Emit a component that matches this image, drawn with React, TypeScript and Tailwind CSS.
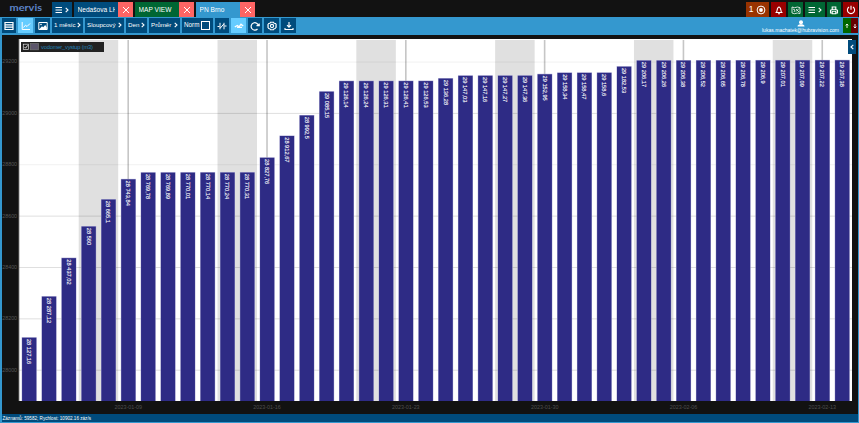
import React from "react";

const values = [
  28127.16, 28287.12, 28437.02, 28560, 28665.1, 28743.84, 28769.78, 28769.89, 28770.01, 28770.14, 28770.24,
  28770.31, 28827.76, 28912.67, 28992.5, 29085.15, 29126.14, 29126.24, 29126.31, 29126.41, 29126.53, 29136.28,
  29147.03, 29147.16, 29147.27, 29147.36, 29152.95, 29158.34, 29158.47, 29158.6, 29182.53, 29206.17, 29206.26,
  29206.38, 29206.52, 29206.65, 29206.78, 29206.9, 29207.01, 29207.09, 29207.22, 29207.38,
];
const dates = ["2023-01-09", "2023-01-16", "2023-01-23", "2023-01-30", "2023-02-06", "2023-02-13"];
const ticks = [29200, 29000, 28800, 28600, 28400, 28200, 28000];

// The chart's own coordinates start at the left border and below the toolbar.
const STEP = 19.83;
const LEFT = 27.2;
const yOf = (v: number) => 335.2 - (v - 28000) * 0.2568;
const label = (v: number) => {
  const [whole, frac] = String(v).split(".");
  return whole.slice(0, 2) + " " + whole.slice(2) + (frac ? "," + frac : "");
};
const widthOf = (s: string) => [...s].reduce((w, c) => w + (c === " " || c === "," ? 1.6 : 3.15), 0);

function Chart() {
  return (
    <svg width="856" height="379" viewBox="0 0 856 379" className="block" fontFamily="'Liberation Sans', Arial, sans-serif">
      <rect x="17" y="4" width="833" height="362" fill="#fff" />
      {dates.map((d, i) => (
        <rect key={d} x={76.7 + i * STEP * 7} y="5" width="39.5" height="361" fill="#e0e0e0" />
      ))}
      {dates.map((d, i) => (
        <rect key={d} x={125.4 + i * STEP * 7} y="5" width="1.6" height="361" fill="#c6c6c6" />
      ))}
      {ticks.map((t) => (
        <rect key={t} x="17" y={yOf(t) - 0.5} width="833" height="1" fill="#000" fillOpacity={t === 29200 || t === 28800 ? 0.06 : 0.13} />
      ))}
      <rect x="16.3" y="4" width="1" height="362" fill="#555" />
      {values.map((v, i) => {
        const x = LEFT + i * STEP;
        const text = label(v);
        return (
          <g key={i}>
            <rect x={x - 7.5} y={yOf(v) - 0.3} width="15" height={366.3 - yOf(v)} fill="#a4a2cf" />
            <rect x={x - 7.1} y={yOf(v) + 0.2} width="14.2" height={365.8 - yOf(v)} fill="#2e2b85" />
            <text
              transform={`translate(${x - 2.1} ${yOf(v) + 1.4}) rotate(90)`}
              fontSize="6"
              fill="#fff"
              stroke="#fff"
              strokeWidth="0.12"
              textLength={widthOf(text)}
              lengthAdjust="spacingAndGlyphs"
            >
              {text}
            </text>
          </g>
        );
      })}
      {ticks.map((t) => (
        <text key={t} x="0.3" y={yOf(t) + 1.4} fontSize="5.4" fill="#565656" textLength="14.8">
          {t}
        </text>
      ))}
      {dates.map((d, i) => (
        <text key={d} x={112.5 + i * STEP * 7} y="374.2" fontSize="5.4" fill="#505050" textLength="27.5">
          {d}
        </text>
      ))}
      <rect x="19" y="7" width="83" height="10" fill="#222" />
      <rect x="21.3" y="9.2" width="5.2" height="5.2" fill="#222" stroke="#ddd" strokeWidth="0.7" />
      <path d="M22.4 11.9l1.2 1.3 2-2.8" stroke="#fff" strokeWidth="0.8" fill="none" />
      <rect x="28.5" y="8.6" width="8" height="6.2" fill="#5c566b" stroke="#777" strokeWidth="0.7" />
      <text x="39" y="13.8" fontSize="5.8" fill="#2484b8" textLength="52">
        vodomer_vystup (m3)
      </text>
    </svg>
  );
}

function Ico({ children, w = 10, sw = 1.2 }: { children: React.ReactNode; w?: number; sw?: number }) {
  return (
    <svg width={w} height="10" viewBox={`0 0 ${w} 10`} fill="none" stroke="#fff" strokeWidth={sw} className="shrink-0">
      {children}
    </svg>
  );
}
const Chevron = () => (
  <svg width="4" height="6" viewBox="0 0 4 6" fill="none" stroke="#fff" strokeWidth="1.1" className="shrink-0">
    <path d="M.7 .8L3 3 .7 5.2" />
  </svg>
);
const Burger = () => (
  <Ico w={8}>
    <path d="M.5 2.5h6.500M.5 5h6.500M.5 7.500h6.500" />
  </Ico>
);

function Tab({ title, bg }: { title: string; bg: string }) {
  return (
    <div className="flex h-[15px] w-[59px] shrink-0">
      <div className={`flex w-[44px] items-center overflow-hidden whitespace-nowrap pl-[3.5px] text-[6.6px] ${bg}`}>
        <span className="block w-[37px] overflow-hidden leading-[9px]">{title}</span>
      </div>
      <div className="flex w-[15px] items-center justify-center bg-[#ff6564]">
        <Ico w={8} sw={1}>
          <path d="M1 2l6 6M7 2L1 8" />
        </Ico>
      </div>
    </div>
  );
}

function Tool({ size, active, children }: { size: string; active?: boolean; children: React.ReactNode }) {
  return (
    <div className={`flex h-[15px] shrink-0 items-center justify-center ${size} ${active ? "bg-[#66ccff]" : "bg-[#004b7c]"}`}>
      {children}
    </div>
  );
}

function Select({ size, text }: { size: string; text: string }) {
  return (
    <Tool size={size}>
      <span className="flex w-full items-center justify-between whitespace-nowrap pl-[2px] pr-[2px] text-[6.2px]">
        {text}
        <Chevron />
      </span>
    </Tool>
  );
}

export default function App() {
  return (
    <div className="flex h-[423px] w-[859px] flex-col overflow-hidden bg-[#3498cf] font-['Liberation_Sans',Arial,sans-serif] leading-none text-white">
      <header className="flex h-[17px] shrink-0 items-start justify-between bg-[#121212] pr-px pt-[2px]">
        <div className="flex gap-[2px]">
          <div className="flex w-[50px] pl-[9px]">
            <svg width="36" height="14" viewBox="0 0 36 14" className="shrink-0">
              <text
                x="0.5"
                y="9.3"
                fontFamily="Lato, sans-serif"
                fontWeight="700"
                fontSize="10"
                fill="#5d84c8"
                textLength="32.5"
                lengthAdjust="spacingAndGlyphs"
              >
                mervis
              </text>
            </svg>
          </div>
          <div className="flex h-[15px] w-[20px] items-center justify-center gap-[2px] bg-[#004b7c]">
            <Burger />
            <Chevron />
          </div>
          <Tab title="Nedašova LH" bg="bg-[#004b7c]" />
          <Tab title="MAP VIEW" bg="bg-[#006633]" />
          <Tab title="PN Brno" bg="bg-[#3498cf]" />
        </div>
        <div className="flex h-[15px] gap-[2px]">
          <div className="flex w-[23px] items-center justify-center gap-[3px] bg-[#993300] text-[8.5px]">
            1
            <Ico sw={1}>
              <circle cx="5" cy="5" r="3.9" />
              <circle cx="5" cy="5" r="1.9" fill="#fff" stroke="none" />
            </Ico>
          </div>
          <div className="flex w-[15px] items-center justify-center bg-[#990000]">
            <Ico sw={1.1}>
              <path d="M1.5 7.5h7M2.5 7.3C3.3 6 3 2 5 2s1.700 4 2.500 5.300M4 8.700h2" />
            </Ico>
          </div>
          <div className="flex w-[15px] items-center justify-center bg-[#006633]">
            <Ico sw={0.8}>
              <path d="M1 2l2.500 .7L6.500 2 9 2.700v5.800L6.500 8 3.500 8.700 1 8z M2 4l2 1-1 2M5 4l3 3M8 3.500L5 6.500" />
            </Ico>
          </div>
          <div className="flex w-[20px] items-center justify-center gap-[2px] bg-[#006633]">
            <Burger />
            <Chevron />
          </div>
          <div className="flex w-[14px] items-center justify-center bg-[#006633]">
            <Ico sw={1.1}>
              <path d="M3.200 4V2h3.600v2M3 8H1.500V5.200Q5 3.200 8.500 5.200V8H7M3.200 6.300h3.600v2.400H3.200z" />
            </Ico>
          </div>
          <div className="flex w-[15px] items-center justify-center bg-[#990000]">
            <Ico sw={1.1}>
              <path d="M5 .8v4M3 2a3.600 3.600 0 1 0 4 0" />
            </Ico>
          </div>
        </div>
      </header>

      <div className="flex h-[18px] shrink-0 items-start justify-between pl-[2px] pr-px pt-px">
        <div className="flex h-[15px]">
          <Tool size="w-[14px]">
            <Ico sw={1.2}>
              <path d="M1 1.500h8v7H1zM1 3.800h8M1 6.100h8" />
            </Ico>
          </Tool>
          <div className="w-[2px]" />
          <Tool size="w-[15px]" active>
            <Ico sw={1}>
              <path d="M1.200 1v7.500H9M2.500 6.500L4.500 4.200 6 5.500 9 2.500" />
            </Ico>
          </Tool>
          <div className="w-[2px]" />
          <Tool size="w-[15px]">
            <Ico sw={1}>
              <path d="M.8 1.500h8.400v7H.8z" />
              <path d="M1.500 8L4 5.200l1.200 1L7.200 4 8.800 6.200V8z" fill="#fff" stroke="none" />
              <circle cx="3" cy="3.500" r=".8" fill="#fff" stroke="none" />
            </Ico>
          </Tool>
          <div className="w-[2px]" />
          <Select size="w-[31px]" text="1 měsíc" />
          <div className="w-[2px]" />
          <Select size="w-[39px]" text="Sloupcový" />
          <div className="w-[2px]" />
          <Select size="w-[21px]" text="Den" />
          <div className="w-[2px]" />
          <Select size="w-[31px]" text="Průměr" />
          <div className="w-[2px]" />
          <Tool size="w-[31px]">
            <span className="flex w-full items-center justify-between pl-[2px] pr-[3px] text-[6.3px]">
              Norm
              <span className="size-[9px] border border-white" />
            </span>
          </Tool>
          <div className="w-[2px]" />
          <Tool size="w-[14px]">
            <Ico sw={1}>
              <path d="M.5 5.500h2M3 1.800v6.500M3.200 7.200L6.800 3M7 1.800v6.500M7.500 5h2" />
            </Ico>
          </Tool>
          <div className="w-[2px]" />
          <Tool size="w-[15px]" active>
            <Ico sw={1.3}>
              <path d="M.8 6L3.300 4.500 5 5.800 7 3.200 9.200 5M3 6.300h5" />
            </Ico>
          </Tool>
          <div className="w-[2px]" />
          <Tool size="w-[14px]">
            <Ico sw={1.200}>
              <path d="M7.500 8A3.700 3.700 0 1 1 8.500 4.800M6.500 4.600h2.700V2.600" />
            </Ico>
          </Tool>
          <div className="w-[2px]" />
          <Tool size="w-[15px]">
            <Ico sw={1.1}>
              <path d="M3.500 1.200h3l.6 1 1.500 .3.700 1.500-.5 1 .5 1-1.200 1.500-1 .2-.6 1.100h-3l-.7-1.100-1.100-.2L.8 6l.5-1-.5-1 .9-1.500 1.200-.3z" />
              <circle cx="5" cy="5" r="1.600" />
            </Ico>
          </Tool>
          <div className="w-[2px]" />
          <Tool size="w-[15px]">
            <Ico sw={1.100}>
              <path d="M5 1v5M3 4.200L5 6.200l2-2M1 7v1.500h8V7" />
            </Ico>
          </Tool>
        </div>
        <div className="flex h-[15px]">
          <div className="flex w-[82px] flex-col items-center pr-[3px] pt-[2px]">
            <svg width="8" height="7" viewBox="0 0 8 7" fill="#fff" className="block shrink-0">
              <circle cx="4" cy="2.300" r="2" />
              <path d="M.5 6.500c0-2 2-2.300 3.500-2.300s3.500 .3 3.500 2.300z" />
            </svg>
            <svg width="79" height="8" viewBox="0 0 79 8" className="block shrink-0">
              <text
                x="1"
                y="5"
                fontSize="5.500"
                fill="#fff"
                textLength="77"
                lengthAdjust="spacingAndGlyphs"
                fontFamily="'Liberation Sans', Arial, sans-serif"
              >
                lukas.machatek@hubravision.com
              </text>
            </svg>
          </div>
          <div className="flex w-[8px] items-center justify-center bg-[#006600]">
            <Ico w={4} sw={0.900}>
              <path d="M2 7V3M.7 4.400L2 3l1.300 1.400" />
            </Ico>
          </div>
          <div className="flex w-[7px] items-center justify-center bg-[#660000]">
            <Ico w={4} sw={0.900}>
              <path d="M2 3v4M.7 5.600L2 7l1.300-1.400" />
            </Ico>
          </div>
        </div>
      </div>

      <main className="relative ml-[2px] h-[379px] w-[856px] shrink-0 bg-[#121212]">
        <Chart />
        <div className="absolute right-[2px] top-[5px] flex h-[14px] w-[8px] items-center justify-center bg-[#004b7c]">
          <span className="block rotate-180">
            <Chevron />
          </span>
        </div>
      </main>
      <footer className="ml-[2px] flex h-[8px] w-[856px] shrink-0 items-center bg-[#004b7c]">
        <svg width="92" height="8" viewBox="0 0 92 8" className="block">
          <text
            x="0.500"
            y="6"
            fontSize="5.400"
            fill="#fff"
            textLength="88.500"
            lengthAdjust="spacingAndGlyphs"
            fontFamily="'Liberation Sans', Arial, sans-serif"
          >
            Záznamů: 59582; Rychlost: 10902.16 záz/s
          </text>
        </svg>
      </footer>
    </div>
  );
}
